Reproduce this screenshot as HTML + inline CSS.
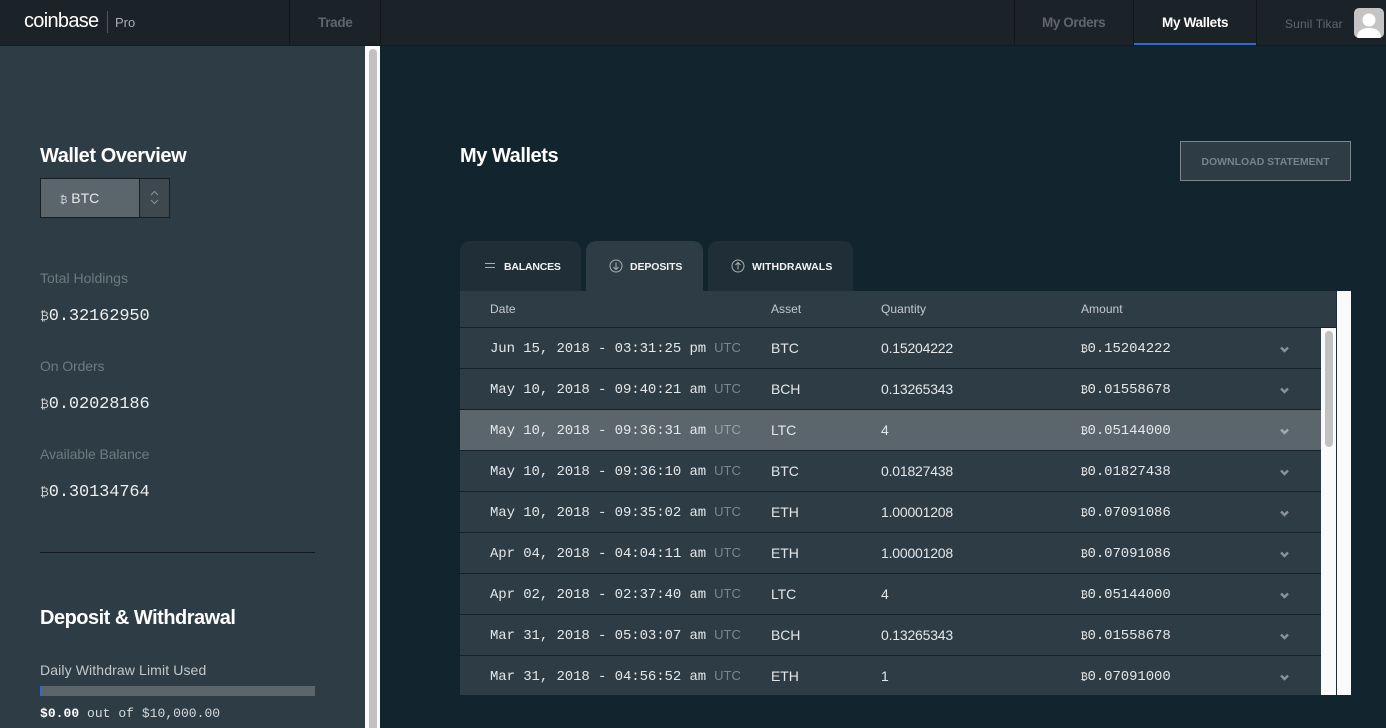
<!DOCTYPE html>
<html><head><meta charset="utf-8"><title>My Wallets</title>
<style>
html,body{margin:0;padding:0;width:1386px;height:728px;overflow:hidden;background:#12242e}
body{position:relative;font-family:"Liberation Sans",sans-serif;color:#fff}
.a{position:absolute;white-space:nowrap}
.m{font-family:"Liberation Mono",monospace}
small{line-height:0}
.row{position:absolute;left:460px;width:861px;height:40px;background:#2d3c45;border-bottom:1px solid #15222b}
.row span{position:absolute;top:0;line-height:40px;white-space:nowrap;color:#e4e7e9}
.row .d{left:30px;top:0;font-family:"Liberation Mono",monospace;font-size:14px;letter-spacing:-.09px}
.row .d i{font-style:normal;color:#7c868c;font-family:"Liberation Sans",sans-serif;font-size:13px;letter-spacing:0;margin-left:8px}
.row .as{left:311px;font-size:14px;letter-spacing:-.1px}
.row .q{left:421px;font-size:14px;letter-spacing:-.2px}
.row .am{left:621px;top:1px;font-family:"Liberation Mono",monospace;font-size:14px;letter-spacing:-.09px}
.row svg{position:absolute;left:820px;top:18px}
.th{position:absolute;top:302px;font-size:12px;color:#c5cacd;letter-spacing:.05px;line-height:14px}
.lab{position:absolute;left:40px;font-size:14px;color:#6f7a80;line-height:16px;letter-spacing:-.1px}
.val{position:absolute;left:40px;font-family:"Liberation Mono",monospace;font-size:17px;letter-spacing:-.12px;color:#eceeef;line-height:20px}
.val small{font-size:12px;font-family:'DejaVu Sans',sans-serif;color:#c9ced1}
.tab{position:absolute;top:241px;height:50px;background:#1f2e37;border-radius:10px 10px 0 0}
.tab b{position:absolute;top:19px;font-size:10.500px;line-height:14px;color:#f1f3f4}
</style></head><body>

<!-- top bar -->
<div class="a" style="left:0;top:0;width:1386px;height:45px;background:#1b2228;border-bottom:1px solid #141a1f"></div>
<div class="a" style="left:289px;top:0;width:1px;height:45px;background:#10161a"></div>
<div class="a" style="left:380px;top:0;width:1px;height:45px;background:#10161a"></div>
<div class="a" style="left:1014px;top:0;width:1px;height:45px;background:#10161a"></div>
<div class="a" style="left:1133px;top:0;width:1px;height:45px;background:#10161a"></div>
<div class="a" style="left:1256px;top:0;width:1px;height:45px;background:#10161a"></div>
<div class="a" style="left:24px;top:8px;font-size:20px;line-height:26px;color:#fff;letter-spacing:-.7px">coinbase</div>
<div class="a" style="left:107px;top:11px;width:1px;height:22px;background:#4d565c"></div>
<div class="a" style="left:115px;top:14px;font-size:13px;line-height:18px;color:#a9afb3">Pro</div>
<div class="a" style="left:318px;top:15px;font-size:13.500px;font-weight:bold;line-height:16px;color:#5f676c;letter-spacing:-.3px">Trade</div>
<div class="a" style="left:1042px;top:15px;font-size:13.500px;font-weight:bold;line-height:16px;color:#5f676c;letter-spacing:-.4px">My Orders</div>
<div class="a" style="left:1162px;top:15px;font-size:13.500px;font-weight:bold;line-height:16px;color:#fff;letter-spacing:-.3px">My Wallets</div>
<div class="a" style="left:1134px;top:43px;width:122px;height:2px;background:#2a6fd0"></div>
<div class="a" style="left:1285px;top:17px;font-size:12px;line-height:14px;color:#5f686e;letter-spacing:.15px">Sunil Tikar</div>
<div class="a" style="left:1354px;top:8px;width:30px;height:30px;background:#c4c4c4;border-radius:5px;overflow:hidden">
<svg width="30" height="30" viewBox="0 0 30 30"><circle cx="15" cy="12" r="6.500" fill="#fff"/><path d="M3 30c0-7 5-10 12-10s12 3 12 10z" fill="#fff"/></svg></div>

<!-- sidebar -->
<div class="a" style="left:0;top:46px;width:365px;height:682px;background:#2d3c45"></div>
<div class="a" style="left:365px;top:46px;width:15px;height:682px;background:#fafafa"></div>
<div class="a" style="left:369px;top:49px;width:8px;height:679px;background:#c1c1c1;border-radius:4px 4px 0 0"></div>

<div class="a" style="left:40px;top:144px;font-size:20px;font-weight:bold;line-height:24px;letter-spacing:-.43px">Wallet Overview</div>
<div class="a" style="left:40px;top:178px;width:99px;height:38px;background:#5b666c;border:1px solid #171e23;border-right:none"></div>
<div class="a" style="left:139px;top:178px;width:29px;height:38px;background:#3e484f;border:1px solid #171e23"></div>
<svg class="a" style="left:149px;top:190px" width="11" height="15" viewBox="0 0 11 15" fill="none" stroke="#8a9297" stroke-width="1"><path d="M2 5l3.500-3.500L9 5M2 10l3.500 3.500L9 10"/></svg>
<div class="a" style="left:60px;top:190px;font-size:14px;line-height:16px;color:#e6e9ea"><small style="font-size:10px;color:#cfd3d6;font-family:'DejaVu Sans',sans-serif">₿</small> BTC</div>

<div class="lab" style="top:270px;letter-spacing:0">Total Holdings</div>
<div class="val" style="top:307px"><small>₿</small>0.32162950</div>
<div class="lab" style="top:358px">On Orders</div>
<div class="val" style="top:395px"><small>₿</small>0.02028186</div>
<div class="lab" style="top:446px">Available Balance</div>
<div class="val" style="top:483px"><small>₿</small>0.30134764</div>

<div class="a" style="left:40px;top:552px;width:275px;height:1px;background:#12191e"></div>
<div class="a" style="left:40px;top:606px;font-size:20px;font-weight:bold;line-height:24px;letter-spacing:-.5px">Deposit &amp; Withdrawal</div>
<div class="a" style="left:40px;top:662px;font-size:14px;line-height:16px;color:#c3c8cb;letter-spacing:.12px">Daily Withdraw Limit Used</div>
<div class="a" style="left:40px;top:686px;width:275px;height:10px;background:#5b666c"></div>
<div class="a" style="left:40px;top:686px;width:1px;height:10px;background:#2a6fd0"></div>
<div class="a m" style="left:40px;top:706px;font-size:13px;line-height:16px;color:#d5d9db;letter-spacing:.03px"><b style="color:#fff">$0.00</b> out of $10,000.00</div>

<!-- main -->
<div class="a" style="left:460px;top:144px;font-size:20px;font-weight:bold;line-height:24px;letter-spacing:-.45px">My Wallets</div>
<div class="a" style="left:1180px;top:141px;width:169px;height:38px;background:#2d3c45;border:1px solid #7c868c;text-align:center;font-size:10.500px;font-weight:bold;line-height:40px;color:#78838a;letter-spacing:-.02px">DOWNLOAD STATEMENT</div>

<!-- tabs -->
<div class="tab" style="left:460px;width:121px"><svg class="a" style="left:24px;top:21px" width="12" height="8" viewBox="0 0 12 8" stroke="#a9afb3" stroke-width="1"><path d="M1 1.500h10M1 5.500h10"/></svg><b style="left:44px;letter-spacing:-.2px">BALANCES</b></div>
<div class="tab" style="left:586px;width:117px;background:#2d3c45"><svg class="a" style="left:23px;top:18px" width="14" height="14" viewBox="0 0 14 14" fill="none" stroke="#a9afb3" stroke-width="1"><circle cx="7" cy="7" r="6"/><path d="M7 3.500v7M4.500 8L7 10.500 9.500 8"/></svg><b style="left:44px;letter-spacing:-.1px">DEPOSITS</b></div>
<div class="tab" style="left:708px;width:145px"><svg class="a" style="left:23px;top:18px" width="14" height="14" viewBox="0 0 14 14" fill="none" stroke="#a9afb3" stroke-width="1"><circle cx="7" cy="7" r="6"/><path d="M7 10.500v-7M4.500 6L7 3.500 9.500 6"/></svg><b style="left:44px;letter-spacing:.1px">WITHDRAWALS</b></div>

<!-- table -->
<div class="a" style="left:460px;top:291px;width:876px;height:36px;background:#2d3c45;border-bottom:1px solid #15222b"></div>
<div class="th" style="left:490px">Date</div>
<div class="th" style="left:771px">Asset</div>
<div class="th" style="left:881px">Quantity</div>
<div class="th" style="left:1081px">Amount</div>

<div class="a" style="left:1321px;top:328px;width:15px;height:367px;background:#fafafa"></div>
<div class="a" style="left:1325px;top:331px;width:8px;height:116px;background:#c1c1c1;border-radius:4px"></div>
<div class="a" style="left:1336px;top:291px;width:1px;height:404px;background:#1f2e37"></div>
<div class="a" style="left:1337px;top:291px;width:14px;height:404px;background:#fafafa"></div>

<div class="row" style="top:328px"><span class="d">Jun 15, 2018 - 03:31:25 pm<i>UTC</i></span><span class="as">BTC</span><span class="q">0.15204222</span><span class="am"><small style="font-size:11px">₿</small>0.15204222</span><svg width="9" height="7" viewBox="0 0 9 7" fill="none" stroke="#8a9297" stroke-width="2.400"><path d="M1 1.500L4.500 5 8 1.500"/></svg></div>
<div class="row" style="top:369px"><span class="d">May 10, 2018 - 09:40:21 am<i>UTC</i></span><span class="as">BCH</span><span class="q">0.13265343</span><span class="am"><small style="font-size:11px">₿</small>0.01558678</span><svg width="9" height="7" viewBox="0 0 9 7" fill="none" stroke="#8a9297" stroke-width="2.400"><path d="M1 1.500L4.500 5 8 1.500"/></svg></div>
<div class="row" style="top:410px;background:#5b666c"><span class="d">May 10, 2018 - 09:36:31 am<i style="color:#98a0a5">UTC</i></span><span class="as">LTC</span><span class="q">4</span><span class="am"><small style="font-size:11px">₿</small>0.05144000</span><svg width="9" height="7" viewBox="0 0 9 7" fill="none" stroke="#a3aaae" stroke-width="2.400"><path d="M1 1.500L4.500 5 8 1.500"/></svg></div>
<div class="row" style="top:451px"><span class="d">May 10, 2018 - 09:36:10 am<i>UTC</i></span><span class="as">BTC</span><span class="q">0.01827438</span><span class="am"><small style="font-size:11px">₿</small>0.01827438</span><svg width="9" height="7" viewBox="0 0 9 7" fill="none" stroke="#8a9297" stroke-width="2.400"><path d="M1 1.500L4.500 5 8 1.500"/></svg></div>
<div class="row" style="top:492px"><span class="d">May 10, 2018 - 09:35:02 am<i>UTC</i></span><span class="as">ETH</span><span class="q">1.00001208</span><span class="am"><small style="font-size:11px">₿</small>0.07091086</span><svg width="9" height="7" viewBox="0 0 9 7" fill="none" stroke="#8a9297" stroke-width="2.400"><path d="M1 1.500L4.500 5 8 1.500"/></svg></div>
<div class="row" style="top:533px"><span class="d">Apr 04, 2018 - 04:04:11 am<i>UTC</i></span><span class="as">ETH</span><span class="q">1.00001208</span><span class="am"><small style="font-size:11px">₿</small>0.07091086</span><svg width="9" height="7" viewBox="0 0 9 7" fill="none" stroke="#8a9297" stroke-width="2.400"><path d="M1 1.500L4.500 5 8 1.500"/></svg></div>
<div class="row" style="top:574px"><span class="d">Apr 02, 2018 - 02:37:40 am<i>UTC</i></span><span class="as">LTC</span><span class="q">4</span><span class="am"><small style="font-size:11px">₿</small>0.05144000</span><svg width="9" height="7" viewBox="0 0 9 7" fill="none" stroke="#8a9297" stroke-width="2.400"><path d="M1 1.500L4.500 5 8 1.500"/></svg></div>
<div class="row" style="top:615px"><span class="d">Mar 31, 2018 - 05:03:07 am<i>UTC</i></span><span class="as">BCH</span><span class="q">0.13265343</span><span class="am"><small style="font-size:11px">₿</small>0.01558678</span><svg width="9" height="7" viewBox="0 0 9 7" fill="none" stroke="#8a9297" stroke-width="2.400"><path d="M1 1.500L4.500 5 8 1.500"/></svg></div>
<div class="row" style="top:656px;height:39px;border-bottom:none"><span class="d">Mar 31, 2018 - 04:56:52 am<i>UTC</i></span><span class="as">ETH</span><span class="q">1</span><span class="am"><small style="font-size:11px">₿</small>0.07091000</span><svg width="9" height="7" viewBox="0 0 9 7" fill="none" stroke="#8a9297" stroke-width="2.400"><path d="M1 1.500L4.500 5 8 1.500"/></svg></div>

</body></html>
